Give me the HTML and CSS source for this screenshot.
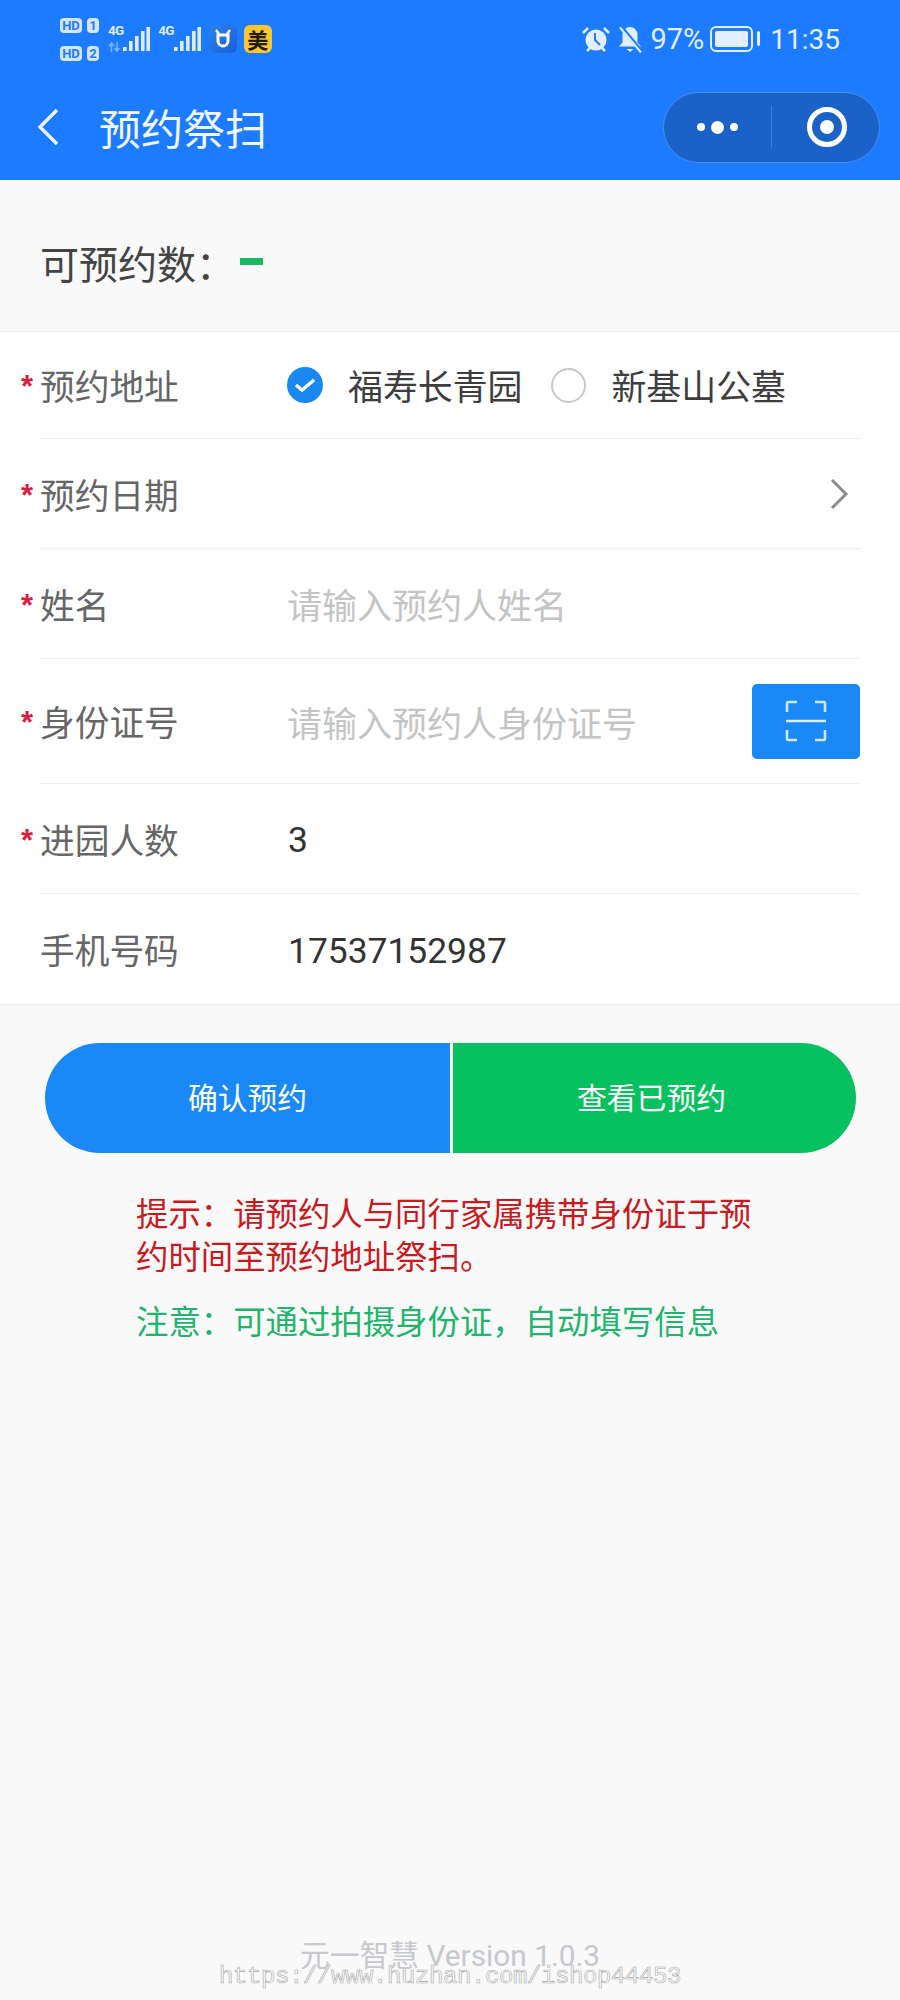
FILE: index.html
```html
<!DOCTYPE html>
<html lang="zh-CN">
<head>
    <meta charset="UTF-8">
    <meta name="viewport" content="width=device-width, initial-scale=1.0">
    <title>预约祭扫</title>
    <link rel="stylesheet" href="styles.css">
</head>
<body>

<div class="page">
    <header class="top">
        <div class="status-bar">
            <div class="status-left">
                <div class="sim-list">
                    <div class="sim"><span class="sim-tag sim-hd">HD</span><span class="sim-tag">1</span></div>
                    <div class="sim"><span class="sim-tag sim-hd">HD</span><span class="sim-tag">2</span></div>
                </div>
                <div class="signal">
                    <span class="net">4G</span>
                    <svg class="arrows" width="13" height="10" viewBox="0 0 13 10"><path d="M3.5 10V2M1 4l2.5-3L6 4M9 0v8M6.5 6L9 9l2.5-3" fill="none" stroke="#7fb2f5" stroke-width="1.6"/></svg>
                    <svg width="28" height="26" viewBox="0 0 28 26"><path d="M1 21h3.6v4H1zM7 15h3.6v10H7zM13 10h3.6v15H13zM19 5h3.6v20H19zM24.4 1H28v24h-3.6z" fill="#dcebff"/></svg>
                </div>
                <div class="signal">
                    <span class="net">4G</span>
                    <svg width="28" height="26" viewBox="0 0 28 26"><path d="M1 21h3.6v4H1zM7 15h3.6v10H7zM13 10h3.6v15H13zM19 5h3.6v20H19zM24.4 1H28v24h-3.6z" fill="#dcebff"/></svg>
                </div>
                <div class="app-icon app-blue">
                    <svg width="20" height="20" viewBox="0 0 20 20"><path d="M5 6h10v6a5 5 0 0 1-10 0z" fill="none" stroke="#fff" stroke-width="3"/><path d="M3 1l3 4M17 1l-3 4" stroke="#fff" stroke-width="2.4"/></svg>
                </div>
                <div class="app-icon app-yellow">美</div>
            </div>
            <div class="status-right">
                <svg width="30" height="27" viewBox="0 0 30 27"><circle cx="15" cy="14" r="10.5" fill="#e3efff"/><path d="M14 7v7l5 5" fill="none" stroke="#1c7bff" stroke-width="2"/><path d="M2 7l5-5M28 7l-5-5M6 25l3-3M24 25l-3-3" stroke="#e3efff" stroke-width="2.5"/></svg>
                <svg class="bell" width="26" height="27" viewBox="0 0 26 27"><path d="M13 1a7.500 7.500 0 0 0-7.500 7.500v8L2 20.500h22l-3.500-4v-8A7.500 7.500 0 0 0 13 1z" fill="#e3efff"/><path d="M9.500 23h7l-3.500 3z" fill="#e3efff"/><path d="M5 2l19 23" stroke="#1c7bff" stroke-width="4"/><path d="M3 1.500l21 25" stroke="#e3efff" stroke-width="2"/></svg>
                <span class="percent">97%</span>
                <div class="battery"><div class="battery-fill"></div></div>
                <span class="clock">11:35</span>
            </div>
        </div>
        <div class="nav-bar">
            <svg class="back" width="22" height="38" viewBox="0 0 22 38"><path d="M20 2L3 19l17 17" fill="none" stroke="#eef5ff" stroke-width="3.4"/></svg>
            <h1>预约祭扫</h1>
            <div class="capsule">
                <div class="capsule-dots"><i></i><i class="big"></i><i></i></div>
                <div class="capsule-line"></div>
                <div class="capsule-target"><i></i></div>
            </div>
        </div>
    </header>

    <div class="quota">
        <span>可预约数：</span>
        <span class="quota-num"></span>
    </div>

    <div class="form">
        <div class="row row-address">
            <label class="required">预约地址</label>
            <div class="row-value">
                <svg class="radio" width="36" height="36" viewBox="0 0 36 36"><circle cx="18" cy="18" r="18" fill="#1a88f0"/><path d="M9 18l6 5 12-10" fill="none" stroke="#fff" stroke-width="3.4"/></svg>
                <span class="option">福寿长青园</span>
                <span class="radio-off"></span>
                <span class="option">新基山公墓</span>
            </div>
        </div>
        <div class="row row-date">
            <label class="required">预约日期</label>
            <div class="row-value row-end">
                <svg class="more" width="20" height="34" viewBox="0 0 20 34"><path d="M3 3l14 14L3 31" fill="none" stroke="#8c8c8c" stroke-width="3"/></svg>
            </div>
        </div>
        <div class="row">
            <label class="required">姓名</label>
            <div class="row-value"><span class="hint">请输入预约人姓名</span></div>
        </div>
        <div class="row row-id">
            <label class="required">身份证号</label>
            <div class="row-value row-between">
                <span class="hint">请输入预约人身份证号</span>
                <button class="scan">
                    <svg width="42" height="42" viewBox="0 0 42 42"><path d="M2 12V3a1 1 0 0 1 1-1h9M30 2h9a1 1 0 0 1 1 1v9M2 30v9a1 1 0 0 0 1 1h9M40 30v9a1 1 0 0 1-1 1h-9" fill="none" stroke="#cfe8ff" stroke-width="2.6"/><path d="M1 21h40" stroke="#dcefff" stroke-width="2.6"/></svg>
                </button>
            </div>
        </div>
        <div class="row">
            <label class="required">进园人数</label>
            <div class="row-value"><span class="text">3</span></div>
        </div>
        <div class="row">
            <label>手机号码</label>
            <div class="row-value"><span class="text">17537152987</span></div>
        </div>
    </div>

    <div class="actions">
        <button class="btn btn-blue">确认预约</button>
        <button class="btn btn-green">查看已预约</button>
    </div>

    <div class="notes">
        <p class="note-red">提示：请预约人与同行家属携带身份证于预约时间至预约地址祭扫。</p>
        <p class="note-green">注意：可通过拍摄身份证，自动填写信息</p>
    </div>

    <footer>元一智慧 Version 1.0.3</footer>
    <div class="watermark">https://www.huzhan.com/ishop44453</div>
</div>

</body>
</html>
```

FILE: styles.css
```css
* {
    box-sizing: border-box;
}

body {
    margin: 0;
    font-family: "Noto Sans CJK SC", "Noto Sans", sans-serif;
    background-color: #f9f9f9;
}

.page {
    position: relative;
    display: flex;
    flex-direction: column;
    height: 2000px;
    overflow: hidden;
}

/* top bar */
.top {
    background-color: #1c7bff;
    height: 180px;
}

.status-bar {
    display: flex;
    justify-content: space-between;
    align-items: center;
    height: 78px;
    padding: 0 60px;
}

.status-left,
.status-right {
    display: flex;
    align-items: center;
}

.sim-list {
    display: flex;
    flex-direction: column;
    gap: 13px;
    margin-right: 9px;
}

.sim {
    display: flex;
    gap: 5px;
}

.sim-tag {
    width: 12px;
    height: 15px;
    border-radius: 4px;
    background-color: #d3e6fb;
    color: #1c7bff;
    font: bold 13px/15px "Roboto", sans-serif;
    text-align: center;
}

.sim-hd {
    width: 22px;
}

.signal {
    position: relative;
    display: flex;
    align-items: flex-start;
    margin-right: 8px;
}

.net {
    margin-top: -3px;
    color: #dcebff;
    font: bold 13.5px/15px "Roboto", sans-serif;
    letter-spacing: -0.8px;
}

.arrows {
    position: absolute;
    left: 0;
    top: 16px;
}

.signal svg:last-child {
    margin-left: -1px;
}

.app-icon {
    display: flex;
    justify-content: center;
    align-items: center;
    width: 28px;
    height: 28px;
    border-radius: 6px;
}

.app-blue {
    background: linear-gradient(135deg, #2c83ec 0%, #1b5ed8 100%);
    margin-right: 7px;
}

.app-yellow {
    background-color: #fcc62d;
    color: #221c08;
    font-size: 21px;
    font-weight: bold;
}

.bell {
    margin-left: 6px;
}

.percent {
    margin-left: 7px;
    color: #e3efff;
    font: 29px "Roboto", sans-serif;
}

.battery {
    position: relative;
    width: 43px;
    height: 26px;
    margin-left: 6px;
    padding: 3px;
    border: 2.5px solid #e3efff;
    border-radius: 6px;
}

.battery:after {
    content: "";
    position: absolute;
    top: 3px;
    right: -9px;
    width: 3px;
    height: 15px;
    border-radius: 2px;
    background-color: #e3efff;
}

.battery-fill {
    height: 100%;
    border-radius: 2px;
    background-color: #e3efff;
}

.clock {
    margin-left: 17px;
    color: #e3efff;
    font: 28px "Roboto", sans-serif;
}

.nav-bar {
    display: flex;
    align-items: center;
    height: 102px;
    padding: 0 20px 4px 37px;
}

.back {
    margin-right: 40px;
}

h1 {
    margin: 0;
    color: #f2f8ff;
    font-size: 42px;
    font-weight: 400;
    line-height: 56px;
}

.capsule {
    display: flex;
    align-items: center;
    width: 217px;
    height: 71px;
    margin-left: auto;
    border: 1px solid #4d8ceb;
    border-radius: 36px;
    background-color: #1a62c8;
}

.capsule-dots {
    display: flex;
    align-items: center;
    justify-content: center;
    gap: 6px;
    width: 107px;
}

.capsule-dots i {
    width: 8px;
    height: 8px;
    border-radius: 50%;
    background-color: #fff;
}

.capsule-dots i.big {
    width: 13px;
    height: 13px;
}

.capsule-line {
    width: 1px;
    height: 42px;
    background-color: #3f7fdc;
}

.capsule-target {
    display: flex;
    justify-content: center;
    align-items: center;
    width: 40px;
    height: 40px;
    margin-left: 35px;
    border: 5px solid #fff;
    border-radius: 50%;
}

.capsule-target i {
    width: 14px;
    height: 14px;
    border-radius: 50%;
    background-color: #fff;
}

/* quota line */
.quota {
    display: flex;
    align-items: center;
    height: 152px;
    padding: 12px 0 0 40px;
    color: #444;
    font-size: 39px;
    border-bottom: 1px solid #ececec;
}

.quota-num {
    width: 23px;
    height: 7px;
    margin-left: 5px;
    background-color: #19b964;
}

/* form */
.form {
    padding-left: 40px;
    background-color: #fff;
    border-bottom: 1px solid #e9e9e9;
}

.row {
    display: flex;
    align-items: center;
    width: 820px;
    height: 110px;
    border-bottom: 1px solid #eeeeee;
    font-size: 34.7px;
}

.row:last-child {
    border-bottom: none;
}

.row-address {
    height: 107px;
}

.row-id {
    height: 125px;
}

label {
    flex: 0 0 248px;
    color: #666;
}

label.required {
    position: relative;
}

label.required:before {
    content: "*";
    position: absolute;
    top: 9px;
    left: -19px;
    color: #d9213f;
    font: bold 31px "Liberation Sans", sans-serif;
}

.row-value {
    flex: 1;
    display: flex;
    align-items: center;
}

.row-end {
    justify-content: flex-end;
    padding-right: 11px;
}

.row-between {
    justify-content: space-between;
}

.radio {
    flex: none;
    margin-left: -1px;
}

.radio-off {
    flex: none;
    width: 35px;
    height: 35px;
    margin-left: 29px;
    border: 2px solid #c8c8c8;
    border-radius: 50%;
}

.option {
    margin-left: 25px;
    color: #3d3d3d;
    font-size: 34.9px;
}

.hint {
    margin-left: -1px;
    color: #c4c4c4;
    font-size: 35px;
}

.text {
    padding-top: 3px;
    color: #333;
    font-family: "Roboto", sans-serif;
    font-size: 35.4px;
}

.scan {
    display: flex;
    justify-content: center;
    align-items: center;
    width: 108px;
    height: 75px;
    padding: 0;
    border: none;
    border-radius: 5px;
    background-color: #1a88f5;
}

/* buttons */
.actions {
    display: flex;
    gap: 3px;
    height: 110px;
    margin: 38px 44px 0 45px;
}

.btn {
    padding: 0 0 4px;
    border: none;
    color: #fff;
    font-family: inherit;
    font-size: 29.8px;
}

.btn-blue {
    flex: 0 0 405px;
    border-radius: 55px 0 0 55px;
    background-color: #1a88f5;
}

.btn-green {
    flex: 1;
    padding-right: 6px;
    border-radius: 0 55px 55px 0;
    background-color: #07c160;
}

/* notes */
.notes {
    padding: 37px 140px 0 136px;
    font-size: 32.4px;
    line-height: 43px;
}

.notes p {
    margin: 0;
}

.note-red {
    color: #c81a1f;
}

.notes .note-green {
    margin-top: 22px;
    color: #20b46c;
}

footer {
    margin-top: auto;
    margin-bottom: 24px;
    color: #c6c8ce;
    font-family: "Roboto", "Noto Sans CJK SC", sans-serif;
    font-size: 29.8px;
    line-height: 40px;
    text-align: center;
}

.watermark {
    position: absolute;
    left: 219px;
    top: 1960px;
    color: #f9f9f9;
    font: 24px/34px "Liberation Mono", monospace;
    letter-spacing: -0.4px;
    -webkit-text-stroke: 0.6px #a8a8a8;
}
```
